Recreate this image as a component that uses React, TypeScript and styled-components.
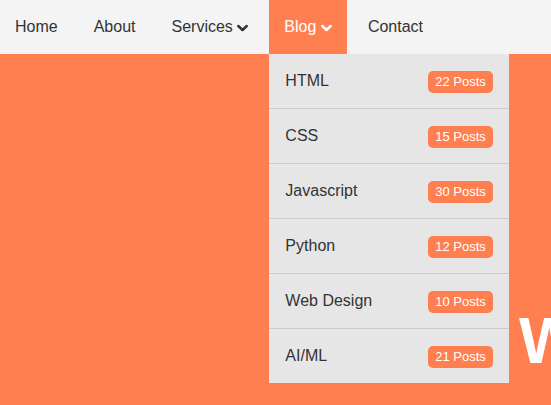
import styled, { createGlobalStyle } from "styled-components";

const GlobalStyle = createGlobalStyle`
	html, body {
		margin: 0;
		padding: 0;
		height: 100%;
		overflow: hidden;
	}

	body {
		font-family: "Liberation Sans", Arial, sans-serif;
		background: #ff7f50;
	}
`;

const NavBar = styled.nav`
	height: 54px;
	background: #f4f4f4;
	display: flex;
	align-items: stretch;
`;

const NavList = styled.ul`
	list-style: none;
	margin: 0;
	padding: 0;
	display: flex;
	gap: 6px;
`;

const NavItem = styled.li<{ $active?: boolean }>`
	position: relative;
	display: flex;
	align-items: center;
	padding: 0 15px;
	font-size: 16px;
	color: ${(props) => (props.$active ? "#ffffff" : "#333333")};
	background: ${(props) => (props.$active ? "#ff7f50" : "transparent")};
	cursor: pointer;
`;

const Chevron = styled.svg`
	width: 11px;
	height: 10px;
	margin-left: 4.5px;
	margin-top: 1px;
`;

const Dropdown = styled.ul`
	position: absolute;
	top: 100%;
	left: 0;
	width: 240px;
	margin: 0;
	padding: 0;
	list-style: none;
	background: #e6e6e6;
	z-index: 2;
`;

const DropdownRow = styled.li`
	height: 54px;
	display: flex;
	align-items: center;
	justify-content: space-between;
	padding: 0 16px;
	color: #333333;
	font-size: 16px;

	&:not(:last-child) {
		border-bottom: 1px solid #cccccc;
	}
`;

const Badge = styled.span`
	background: #ff7f50;
	color: #ffffff;
	font-size: 13px;
	line-height: 22px;
	height: 22px;
	padding: 0 7.5px;
	border-radius: 5px;
	margin-top: 1px;
`;

const Hero = styled.section`
	padding: 255px 0 0 519px;
	overflow: hidden;
`;

const HeroTitle = styled.h1`
	margin: 0;
	font-size: 64px;
	line-height: 1;
	font-weight: bold;
	color: #ffffff;
	white-space: nowrap;
`;

const posts = [
	{ name: "HTML", count: 22 },
	{ name: "CSS", count: 15 },
	{ name: "Javascript", count: 30 },
	{ name: "Python", count: 12 },
	{ name: "Web Design", count: 10 },
	{ name: "AI/ML", count: 21 },
];

function ChevronDown({ color }: { color: string }): JSX.Element {
	return (
		<Chevron viewBox="0 0 11 10">
			<path d="M1.3 3 L5.5 7 L9.7 3" fill="none" stroke={color} strokeWidth="2.5" strokeLinecap="round" strokeLinejoin="round" />
		</Chevron>
	);
}

export default function App(): JSX.Element {
	return (
		<>
			<GlobalStyle />
			<NavBar>
				<NavList>
					<NavItem>Home</NavItem>
					<NavItem>About</NavItem>
					<NavItem>Services <ChevronDown color="#333333" /></NavItem>
					<NavItem $active>
						Blog <ChevronDown color="#ffffff" />
						<Dropdown>
							{posts.map((post) =>
								<DropdownRow key={post.name}>
									{post.name}
									<Badge>{post.count} Posts</Badge>
								</DropdownRow>
							)}
						</Dropdown>
					</NavItem>
					<NavItem>Contact</NavItem>
				</NavList>
			</NavBar>
			<Hero>
				<HeroTitle>Welcome</HeroTitle>
			</Hero>
		</>
	);
}
